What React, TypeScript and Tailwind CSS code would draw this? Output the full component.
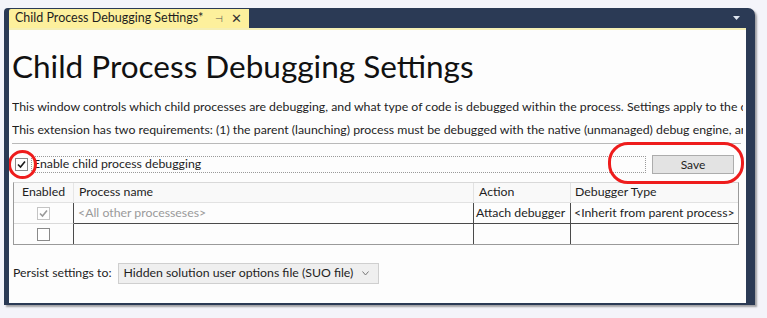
import React from 'react';

const font = { fontFamily: '"Lato", "Noto Sans", sans-serif' };

const Check: React.FC<{ checked?: boolean; disabled?: boolean }> = ({ checked, disabled }) => (
    <span className={`flex items-center justify-center w-[13px] h-[13px] border bg-white ${disabled ? 'border-[#c4c4c4]' : 'border-[#8a8a8a]'}`}>
        {checked && (
            <svg width="9" height="9" viewBox="0 0 9 9">
                <path d="M1 4.5 L3.5 7 L8 1.5" fill="none" stroke={disabled ? '#9a9a9a' : '#1a1a1a'} strokeWidth="1.6" />
            </svg>
        )}
    </span>
);

export default function App() {
    return (
        <div className="w-[767px] h-[318px] bg-[#f4f4fa] pt-[8px] pl-[4px] overflow-hidden" style={font}>
            <div className="relative w-[751px] h-[297px] bg-[#2b3a55] rounded-tl-[4px] rounded-tr-[7px] pl-[5px] pr-[9px] pb-[2px] flex flex-col shadow-[2px_2px_2px_rgba(0,0,0,0.35)]">
                <div className="h-[20px] flex items-stretch shrink-0">
                    <div className="w-[240px] mt-[1px] bg-[#fdf09c] flex items-center pl-[6px] text-[12.5px] text-[#1e1e1e] rounded-tl-[2px]">
                        <span>Child Process Debugging Settings*</span>
                        <span className="ml-[12px] text-[9px] text-[#555]">⊣</span>
                        <span className="ml-[8px] text-[13px] leading-none text-[#333]">✕</span>
                    </div>
                    <div className="flex-1 flex items-center justify-end pr-[6px]">
                        <svg width="7" height="4" viewBox="0 0 7 4"><path d="M0 0 H7 L3.5 4 Z" fill="#dfe6f0" /></svg>
                    </div>
                </div>
                <div className="flex-1 bg-[#fdfdfd] border-t-[2px] border-[#f5efb5] pl-[3px] pr-[3px] flex flex-col text-[12.3px] text-[#1e1e1e] overflow-hidden">
                    <h1 className="mt-[16px] text-[31.5px] leading-[40px] text-[#111] whitespace-nowrap">Child Process Debugging Settings</h1>
                    <p className="mt-[9px] leading-[23px] whitespace-nowrap overflow-hidden">This window controls which child processes are debugging, and what type of code is debugged within the process. Settings apply to the current solution.</p>
                    <p className="leading-[23px] whitespace-nowrap overflow-hidden">This extension has two requirements: (1) the parent (launching) process must be debugged with the native (unmanaged) debug engine, and (2) the child process must be launched.</p>
                    <div className="mt-[2px] h-px bg-[#b9b9b9] mr-[2px]" />

                    <div className="relative mt-[11px] h-[19px] flex items-center">
                        <div className="ml-[3px]"><Check checked /></div>
                        <div className="ml-[3px] flex-1 h-[17px] border border-dotted border-[#9a9a9a] flex items-center pl-[1px] leading-none">Enable child process debugging</div>
                        <button className="ml-[6px] mr-[9px] w-[82px] h-[19px] bg-[#e3e3e3] border border-[#acacac] text-[12px] text-[#1e1e1e]">Save</button>
                        <div className="absolute left-[-4px] top-[-5px] w-[29px] h-[29px] rounded-full border-[3px] border-[#ee1c1c]" />
                        <div className="absolute left-[596px] top-[-13px] w-[136px] h-[42px] rounded-[20px] border-[3px] border-[#ee1c1c]" />
                    </div>

                    <div className="mt-[8px] ml-[1px] mr-[4px] border border-[#9a9a9a] border-t-[#d9d9d9]">
                        <div className="grid grid-cols-[60px_399px_97px_1fr] h-[20px] bg-[#f9f9f9] border-b border-[#e2e2e2]">
                            <div className="flex items-center justify-center border-r border-[#e6e6e6]">Enabled</div>
                            <div className="flex items-center pl-[5px]">Process name</div>
                            <div className="flex items-center pl-[5px] border-l border-[#e2e2e2]">Action</div>
                            <div className="flex items-center pl-[4px] border-l border-[#e2e2e2]">Debugger Type</div>
                        </div>
                        <div className="grid grid-cols-[60px_399px_97px_1fr] h-[21px] border-b border-[#4a4a4a]">
                            <div className="flex items-center justify-center border-r border-[#4a4a4a] border-b border-b-[#dadada] -mb-px"><Check checked disabled /></div>
                            <div className="flex items-center pl-[4px] text-[#9a9a9a]">&lt;All other processeses&gt;</div>
                            <div className="flex items-center pl-[2px] border-l border-[#4a4a4a] whitespace-nowrap">Attach debugger</div>
                            <div className="flex items-center pl-[3px] border-l border-[#4a4a4a] whitespace-nowrap">&lt;Inherit from parent process&gt;</div>
                        </div>
                        <div className="grid grid-cols-[60px_399px_97px_1fr] h-[20px]">
                            <div className="flex items-center justify-center border-r border-[#4a4a4a]"><Check /></div>
                            <div />
                            <div className="border-l border-[#4a4a4a]" />
                            <div className="border-l border-[#4a4a4a]" />
                        </div>
                    </div>

                    <div className="mt-[18px] ml-[1px] flex items-center">
                        <span>Persist settings to:</span>
                        <div className="ml-[6px] w-[261px] h-[21px] bg-[#efefef] border border-[#cfcfcf] flex items-center pl-[5px]">
                            <span>Hidden solution user options file (SUO file)</span>
                            <svg className="ml-[9px]" width="7" height="5" viewBox="0 0 7 5"><path d="M0.5 0.5 L3.5 4 L6.5 0.5" fill="none" stroke="#777" strokeWidth="1" /></svg>
                        </div>
                    </div>
                </div>
            </div>
        </div>
    );
}
